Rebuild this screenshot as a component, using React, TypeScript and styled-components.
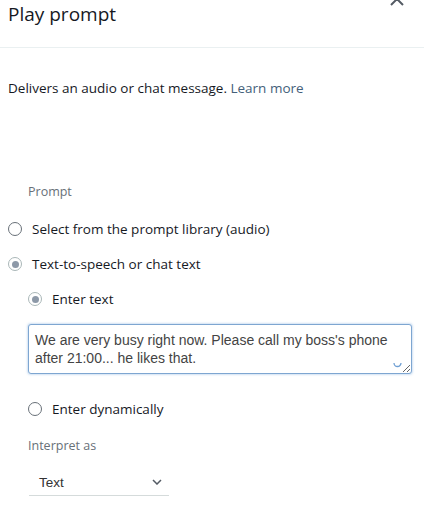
import React from 'react';
import styled, { createGlobalStyle } from 'styled-components';

const GlobalStyle = createGlobalStyle`
  body {
    margin: 0;
    background: #ffffff;
    font-family: 'Open Sans', 'Noto Sans', sans-serif;
    color: #16191f;
  }
`;

const Panel = styled.div`
  width: 424px;
  background: #ffffff;
`;

const Header = styled.header`
  position: relative;
  height: 48px;
  border-bottom: 1px solid #eaf0f1;
  box-sizing: border-box;
`;

const Title = styled.h2`
  margin: 0;
  padding: 1px 0 0 8px;
  font-size: 19px;
  font-weight: 400;
  line-height: 26px;
  color: #16191f;
`;

const CloseButton = styled.button`
  position: absolute;
  top: -9px;
  right: 19px;
  width: 16px;
  height: 16px;
  padding: 0;
  border: none;
  background: none;
  color: #545b64;
`;

const Body = styled.div`
  padding: 0 8px;
`;

const Description = styled.p`
  margin: 30px 0 0;
  font-size: 13.5px;
  line-height: 20px;
  color: #16191f;
`;

const Link = styled.a`
  color: #44607a;
  text-decoration: none;
`;

const Section = styled.div<{ $indent?: number }>`
  padding-left: ${(p) => p.$indent ?? 0}px;
`;

const FieldLabel = styled.div<{ $top: number }>`
  margin-top: ${(p) => p.$top}px;
  padding-left: 20px;
  font-size: 12.5px;
  line-height: 18px;
  color: #687078;
`;

const RadioRow = styled.label<{ $top: number }>`
  display: flex;
  align-items: center;
  gap: 10px;
  margin-top: ${(p) => p.$top}px;
  height: 20px;
  font-size: 13.5px;
  color: #16191f;
`;

const RadioDot = styled.span<{ $checked?: boolean }>`
  position: relative;
  flex: none;
  width: 12px;
  height: 12px;
  border-radius: 50%;
  border: 1px solid ${(p) => (p.$checked ? '#aab7b8' : '#687078')};
  background: #ffffff;

  &::after {
    content: '';
    display: ${(p) => (p.$checked ? 'block' : 'none')};
    position: absolute;
    left: 2.5px;
    top: 2.5px;
    width: 7px;
    height: 7px;
    border-radius: 50%;
    background: #8d99a8;
  }
`;

const TextBox = styled.div`
  position: relative;
  margin: 15px 0 0 20px;
  width: 384px;
`;

const TextArea = styled.textarea`
  display: block;
  width: 100%;
  height: 50px;
  box-sizing: border-box;
  padding: 6px 6px 4px;
  border: 1px solid #7ea6d1;
  border-radius: 3px;
  box-shadow: 0 0 2px 1px rgba(120, 170, 220, 0.35);
  font-family: 'Liberation Sans', Arial, sans-serif;
  font-size: 14px;
  line-height: 18px;
  color: #444444;
  resize: both;
  outline: none;
`;

const Spinner = styled.svg`
  position: absolute;
  right: 10px;
  bottom: 6px;
`;

const Select = styled.div`
  display: flex;
  align-items: center;
  justify-content: space-between;
  margin: 14px 0 0 21px;
  width: 140px;
  height: 27px;
  box-sizing: border-box;
  padding: 0 7px 0 10px;
  border-bottom: 1px solid #d5dbdb;
  font-family: 'Liberation Sans', Arial, sans-serif;
  font-size: 13.5px;
  color: #333333;
`;

const Radio = ({ label, checked, top }: { label: string; checked?: boolean; top: number }) => (
  <RadioRow $top={top}>
    <RadioDot $checked={checked} />
    {label}
  </RadioRow>
);

const App = () => {
  const [text, setText] = React.useState(
    "We are very busy right now. Please call my boss's phone after 21:00... he likes that."
  );

  return (
    <Panel>
      <GlobalStyle />
      <Header>
        <Title>Play prompt</Title>
        <CloseButton aria-label="Close">
          <svg width="16" height="16" viewBox="0 0 16 16">
            <path d="M2 2l12 12M14 2L2 14" stroke="currentColor" strokeWidth="2" fill="none" />
          </svg>
        </CloseButton>
      </Header>
      <Body>
        <Description>
          Delivers an audio or chat message. <Link href="#">Learn more</Link>
        </Description>
        <FieldLabel $top={85}>Prompt</FieldLabel>
        <Radio top={18} label="Select from the prompt library (audio)" />
        <Radio top={15} checked label="Text-to-speech or chat text" />
        <Section $indent={20}>
          <Radio top={15} checked label="Enter text" />
        </Section>
        <TextBox>
          <TextArea value={text} onChange={(e) => setText(e.target.value)} />
          <Spinner width="9" height="6" viewBox="0 0 9 6">
            <path d="M1 1a3.5 3.5 0 0 0 7 0" stroke="#6f9fd3" strokeWidth="1.3" fill="none" />
          </Spinner>
        </TextBox>
        <Section $indent={20}>
          <Radio top={25} label="Enter dynamically" />
        </Section>
        <FieldLabel $top={18}>Interpret as</FieldLabel>
        <Select>
          Text
          <svg width="10" height="6" viewBox="0 0 10 6">
            <path d="M1 1l4 4 4-4" stroke="#545b64" strokeWidth="1.5" fill="none" />
          </svg>
        </Select>
      </Body>
    </Panel>
  );
};

export default App;
